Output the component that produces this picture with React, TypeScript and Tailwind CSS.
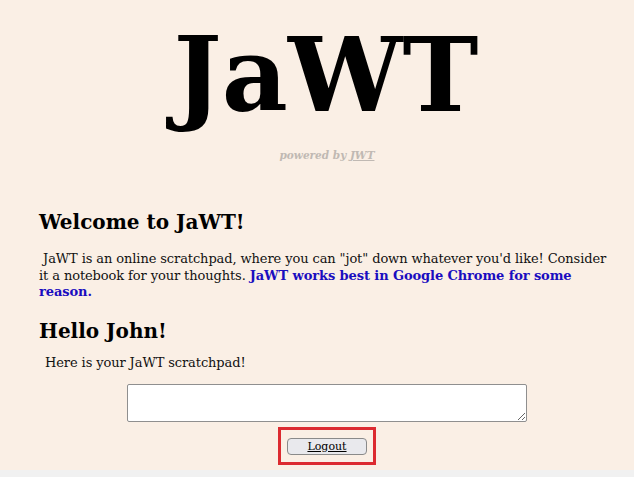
export default function App() {
  return (
    <div className="w-[634px] h-[477px] bg-[#f1f1f1] overflow-hidden" style={{ fontFamily: '"DejaVu Serif", serif' }}>
      <div className="h-[470px] bg-[#faefe5] flex flex-col">
        <h1 className="text-center font-bold text-[102px] leading-none pt-[24px] pl-[18px] text-black">JaWT</h1>
        <p className="text-center text-[10.5px] leading-[16px] italic font-bold text-[#c0b9b3] mt-[21px] pl-[20px]">
          powered by <span className="underline">JWT</span>
        </p>
        <div className="pl-[39px] pr-[19px] mt-[47px] text-[13px] tracking-[-0.1px] text-[#111]">
          <h2 className="text-[20px] font-bold text-black leading-tight tracking-normal">Welcome to JaWT!</h2>
          <p className="mt-[16px] leading-[16.5px]">
            &nbsp;JaWT is an online scratchpad, where you can "jot" down whatever you'd like! Consider it a notebook for your thoughts.{' '}
            <span className="font-bold text-[#1a0dc0]">JaWT works best in Google Chrome for some reason.</span>
          </p>
          <h2 className="text-[20px] font-bold text-black leading-tight tracking-normal mt-[18px]">Hello John!</h2>
          <p className="mt-[9px] pl-[6px]">Here is your JaWT scratchpad!</p>
          <div className="flex flex-col items-center mt-[12px]">
            <textarea className="w-[400px] h-[38px] bg-white border border-[#8f8f8f] rounded-[2px] resize-y" />
            <div className="mt-[5px] w-[98px] h-[38px] border-[3px] border-[#dc2a30] flex items-center justify-center">
              <button className="w-[80px] h-[17px] rounded-[4px] border border-[#8a8a8a] bg-[#e9e9ed] text-[11px] leading-none underline tracking-normal text-black">
                Logout
              </button>
            </div>
          </div>
        </div>
      </div>
    </div>
  );
}
